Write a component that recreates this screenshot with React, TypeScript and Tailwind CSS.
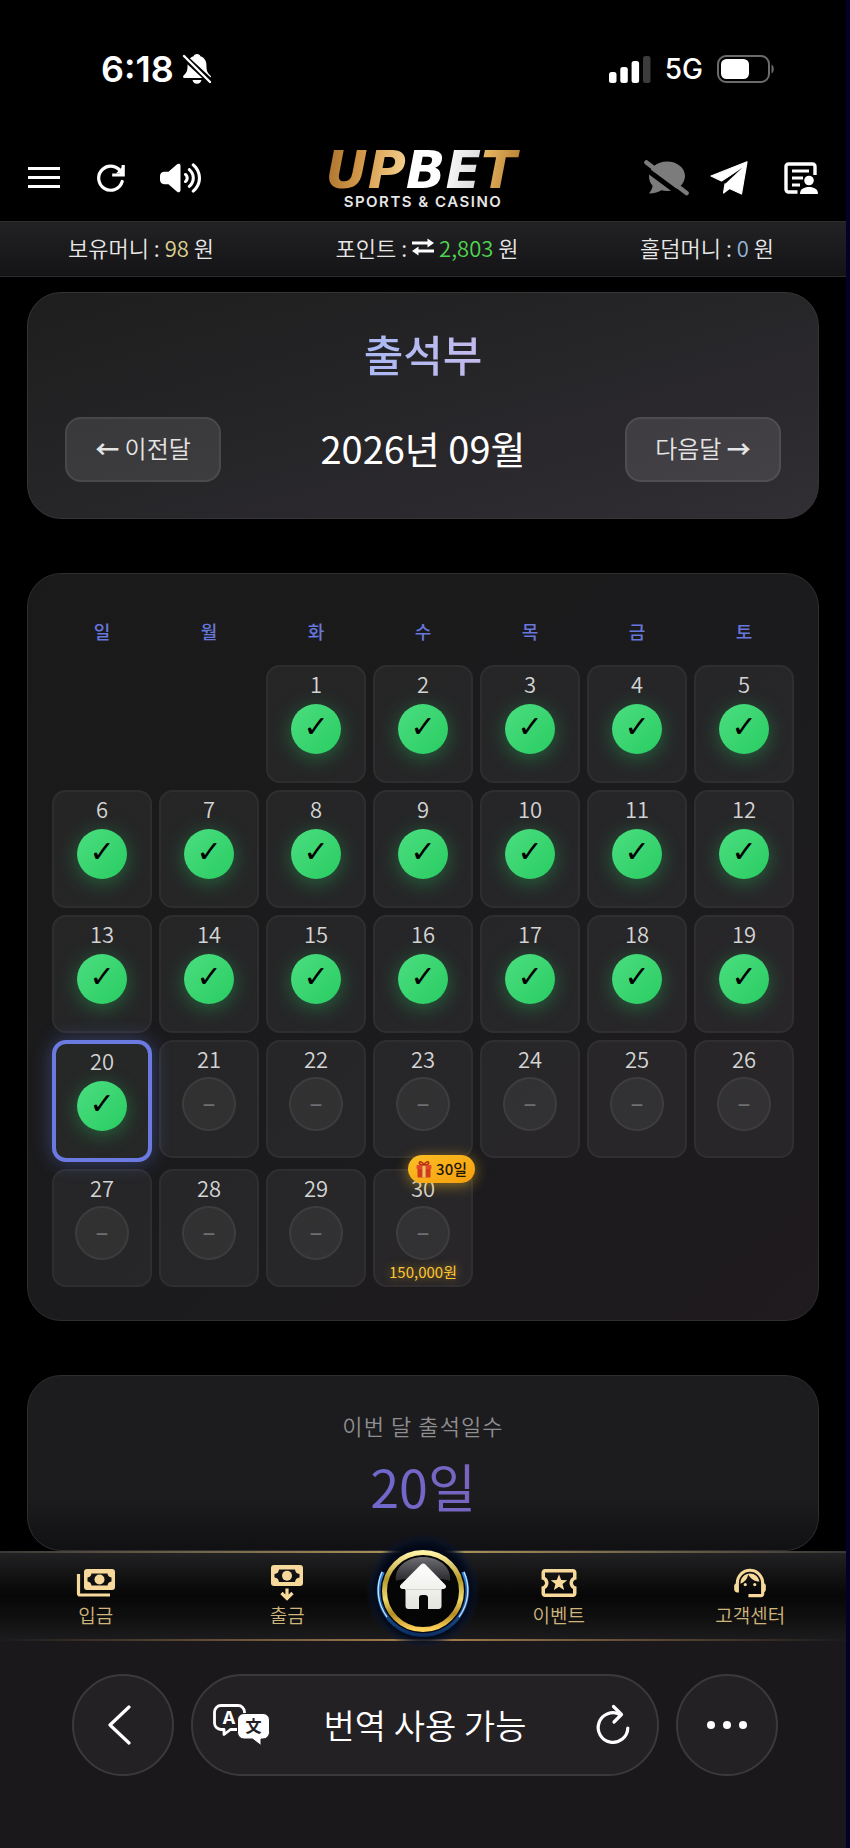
import React from 'react';
import { FaVolumeHigh } from 'react-icons/fa6';
import { MdOutlineLocalActivity, MdSupportAgent } from 'react-icons/md';

const WEEKDAYS = ['일', '월', '화', '수', '목', '금', '토'];
const FIRST_WEEKDAY = 2;
const DAYS_IN_MONTH = 30;
const TODAY = 20;

type Reward = { label: string; amount: string };

const REWARDS: Record<number, Reward> = {
  30: { label: '30일', amount: '150,000원' },
};

function BellOffIcon() {
  return (
    <svg width="30" height="32" viewBox="0 0 30 32" aria-hidden="true">
      <path
        d="M15 1c-1.900 0-3 1-3.400 2.200C7.600 4.500 5.600 8 5.600 12c0 6-1 7.500-4 10.500-1 1-.6 2.500.9 2.500h25c1.500 0 1.900-1.500.9-2.500-3-3-4-4.500-4-10.500 0-4-2-7.500-6-8.800C18 2 16.900 1 15 1zM10.500 27a4.600 4.600 0 0 0 9 0z"
        fill="#fff"
      />
      <path d="M1 3l28 26" stroke="#000" strokeWidth="6" />
      <path d="M2 3l26 26" stroke="#fff" strokeWidth="2.400" strokeLinecap="round" />
    </svg>
  );
}

function SignalIcon() {
  return (
    <svg width="42" height="27" viewBox="0 0 42 27" aria-hidden="true">
      <rect x="0" y="16" width="7.500" height="11" rx="2.500" fill="#fff" />
      <rect x="11.300" y="11" width="7.500" height="16" rx="2.500" fill="#fff" />
      <rect x="22.600" y="5" width="7.500" height="22" rx="2.500" fill="#fff" />
      <rect x="34" y="0" width="7.500" height="27" rx="2.500" fill="#3c3c3c" />
    </svg>
  );
}

function BatteryIcon() {
  return (
    <svg width="58" height="28" viewBox="0 0 58 28" aria-hidden="true">
      <rect x="1" y="1" width="51" height="26" rx="8" fill="none" stroke="#6b6b6b" strokeWidth="2" />
      <rect x="4" y="4" width="28" height="20" rx="5.500" fill="#fff" />
      <path d="M54.500 9.500c3 1.500 3 7.500 0 9z" fill="#6b6b6b" />
    </svg>
  );
}

function RefreshIcon() {
  return (
    <svg width="30" height="30" viewBox="0 0 30 30" fill="none" stroke="#fff" strokeWidth="3.200" aria-hidden="true">
      <path d="M26.200 18.500A12 12 0 1 1 25.500 10" strokeLinecap="round" />
      <path d="M27.200 2v10h-11" strokeLinejoin="miter" />
      <path d="M20 10.400h7V3z" fill="#fff" stroke="none" />
    </svg>
  );
}

function ChatOffIcon() {
  return (
    <svg width="46" height="38" viewBox="0 0 46 38" aria-hidden="true">
      <path
        d="M23 2.500C33 2.500 41 8.700 41 17S33 32 23 32c-2 0-4-.2-5.600-.7C14.500 33.200 10.500 34.500 5 34.500c2-2.500 3.300-5 3.600-7.700C6.300 24.200 5 21 5 17.500 5 9 13 2.500 23 2.500z"
        fill="#7c7c7c"
      />
      <path d="M-1 8l42 31" stroke="#000" strokeWidth="5" />
      <path d="M2.500 3.500l40 30.500" stroke="#7c7c7c" strokeWidth="4.600" strokeLinecap="round" />
    </svg>
  );
}

function PlaneIcon() {
  return (
    <svg width="38" height="34" viewBox="0 0 38 34" aria-hidden="true">
      <path
        d="M37 .8L1 15l10.500 5L31 7.500 15 23l-1.500 9 6-4.500L31.500 33z"
        fill="#fff"
        strokeLinejoin="round"
        stroke="#fff"
        strokeWidth="1.200"
      />
      <path d="M12.800 20.700L32.500 6.500 15.500 22.500z" fill="#000" />
    </svg>
  );
}

function NoteUserIcon() {
  return (
    <svg width="34" height="34" viewBox="0 0 34 34" aria-hidden="true">
      <path d="M13.500 31H4.500a2.500 2.500 0 0 1-2.500-2.500v-23A2.500 2.500 0 0 1 4.500 3h24A2.500 2.500 0 0 1 31 5.500V14" fill="none" stroke="#fff" strokeWidth="3.400" />
      <path d="M8 10h17M8 17h11M8 24h8" stroke="#fff" strokeWidth="3" />
      <circle cx="25" cy="19.500" r="4.800" fill="#fff" />
      <path d="M16 33c0-5 4-7 9-7s9 2 9 7z" fill="#fff" />
    </svg>
  );
}

function SwapIcon() {
  return (
    <svg width="24" height="18" viewBox="0 0 24 18" fill="#fff" aria-hidden="true">
      <path d="M1 3.500h15.500V.6L23 5l-6.500 4.400V6.500H1zM23 11.600H7.500V8.600L1 13l6.500 4.400v-2.800H23z" />
    </svg>
  );
}

function GiftIcon() {
  return (
    <svg width="16" height="17" viewBox="0 0 16 17" aria-hidden="true">
      <rect x="1.500" y="6.500" width="13" height="10" rx="1" fill="#cf3a1f" />
      <rect x="0.500" y="4" width="15" height="4" rx="1" fill="#e2492a" />
      <rect x="6.400" y="4" width="3.200" height="12.500" fill="#f0c05a" />
      <path d="M8 4C5 4 2.800 3.200 3.400 1.600 4 .2 6.800.8 8 4zM8 4c3 0 5.200-.8 4.600-2.400C12 .2 9.200.8 8 4z" fill="none" stroke="#b5281a" strokeWidth="1.500" />
    </svg>
  );
}

function DepositIcon() {
  return (
    <svg width="40" height="30" viewBox="0 0 40 30" aria-hidden="true">
      <path
        fillRule="evenodd"
        d="M11 1h25a3 3 0 0 1 3 3v15a3 3 0 0 1-3 3H11a3 3 0 0 1-3-3V4a3 3 0 0 1 3-3zM15.500 5.500a4.500 4.500 0 0 1-4 4v4a4.500 4.500 0 0 1 4 4h16a4.500 4.500 0 0 1 4-4v-4a4.500 4.500 0 0 1-4-4z"
        fill="#f7d99b"
      />
      <circle cx="23.500" cy="11.500" r="5" fill="#f7d99b" />
      <path d="M2.500 6v19.500a1.500 1.500 0 0 0 1.500 1.500h30" fill="none" stroke="#f7d99b" strokeWidth="3.200" />
    </svg>
  );
}

function WithdrawIcon() {
  return (
    <svg width="34" height="36" viewBox="0 0 34 36" aria-hidden="true">
      <path
        fillRule="evenodd"
        d="M4 0h26a3 3 0 0 1 3 3v15a3 3 0 0 1-3 3H4a3 3 0 0 1-3-3V3a3 3 0 0 1 3-3zM9 4.500a5 5 0 0 1-4.500 4.500v3.500A5 5 0 0 1 9 17h16a5 5 0 0 1 4.500-4.500V9A5 5 0 0 1 25 4.500z"
        fill="#f7d99b"
      />
      <circle cx="17" cy="10.700" r="5" fill="#f7d99b" />
      <path d="M17 23.500v9M11.500 28l5.500 5.500 5.500-5.500" fill="none" stroke="#f7d99b" strokeWidth="3.200" />
    </svg>
  );
}

function HomeBadge() {
  return (
    <svg className="shrink-0" width="116" height="116" viewBox="-58 -58 116 116" aria-hidden="true">
      <defs>
        <linearGradient id="ring" x1="0" y1="0" x2="0" y2="1">
          <stop offset="0" stopColor="#fff3a6" />
          <stop offset="0.350" stopColor="#b79a2b" />
          <stop offset="0.600" stopColor="#f0dc6a" />
          <stop offset="0.800" stopColor="#b48a22" />
          <stop offset="1" stopColor="#ffd35a" />
        </linearGradient>
        <linearGradient id="gloss" x1="0" y1="0" x2="0" y2="1">
          <stop offset="0" stopColor="#6d6d72" />
          <stop offset="1" stopColor="#29292c" />
        </linearGradient>
        <linearGradient id="house" x1="0" y1="0" x2="0" y2="1">
          <stop offset="0" stopColor="#ffffff" />
          <stop offset="1" stopColor="#e4e4de" />
        </linearGradient>
        <linearGradient id="arc" x1="0" y1="0" x2="0" y2="1">
          <stop offset="0" stopColor="#2f86dd" />
          <stop offset="1" stopColor="#0c2f63" />
        </linearGradient>
        <radialGradient id="halo">
          <stop offset="0.780" stopColor="#020817" />
          <stop offset="0.860" stopColor="#040d20" stopOpacity="0.800" />
          <stop offset="1" stopColor="#0a1c40" stopOpacity="0" />
        </radialGradient>
      </defs>
      <circle r="57" fill="url(#halo)" />
      <path d="M-40 -19A44 44 0 0 0 0 44A44 44 0 0 0 40 -19" fill="none" stroke="url(#arc)" strokeWidth="3.500" />
      <path d="M-41 -19A45 45 0 0 0 -36 26M41 -19A45 45 0 0 1 36 26" fill="none" stroke="#bfe0ff" strokeWidth="1.300" />
      <circle r="38.500" fill="#050505" stroke="url(#ring)" strokeWidth="5" />
      <path d="M-27 -10C-29 -24 -16 -34 0 -34S29 -24 27 -10C18 -14 -18 -14 -27 -10z" fill="url(#gloss)" />
      <path
        d="M-2 -26.500a3.500 3.500 0 0 1 4.500 0L22 -6.500c2 2 1 4.500-2 4.500h-1.500v17a3 3 0 0 1-3 3H5V7a3 3 0 0 0-3-3h-3a3 3 0 0 0-3 3v11h-10.500a3 3 0 0 1-3-3V-2H-20c-3 0-4-2.500-2-4.500z"
        fill="url(#house)"
      />
      <path d="M-18 -1.500h36.500" stroke="#d4d4cc" strokeWidth="1" />
    </svg>
  );
}

function TranslateIcon() {
  return (
    <svg width="58" height="42" viewBox="0 0 58 42" aria-hidden="true">
      <path
        d="M8 1.500h17a6.500 6.500 0 0 1 6.500 6.500v11a6.500 6.500 0 0 1-6.500 6.500h-7.500L11 30.500v-5H8A6.500 6.500 0 0 1 1.500 19V8A6.500 6.500 0 0 1 8 1.500z"
        fill="none"
        stroke="#fff"
        strokeWidth="2.800"
        strokeLinejoin="round"
      />
      <path d="M31 9.500h19a6.500 6.500 0 0 1 6.500 6.500v12.500A6.500 6.500 0 0 1 50 35h-2v6.500L39.500 35H31a6.500 6.500 0 0 1-6.500-6.500V16A6.500 6.500 0 0 1 31 9.500z" fill="#fff" stroke="#232023" strokeWidth="1" />
      <text x="16" y="20" fontSize="18" fontWeight="700" fill="#fff" textAnchor="middle" fontFamily="Inter, sans-serif">A</text>
      <text x="40.500" y="28" fontSize="16" fontWeight="700" fill="#232023" textAnchor="middle" fontFamily="'Noto Sans CJK KR', sans-serif">文</text>
    </svg>
  );
}

function StatusBar() {
  return (
    <div className="flex h-[134px] items-center justify-between pt-1 pr-[71px] pl-[101px] font-[Inter,sans-serif] text-white">
      <div className="flex items-center gap-2">
        <span className="text-4xl leading-10 font-semibold">6:18</span>
        <BellOffIcon />
      </div>
      <div className="flex items-center gap-3.5">
        <SignalIcon />
        <span className="text-[28px] leading-10 font-medium">5G</span>
        <BatteryIcon />
      </div>
    </div>
  );
}

function Logo() {
  return (
    <a href="#" className="flex flex-col items-center">
      <span className="bg-[linear-gradient(100deg,#a8702c_0%,#d59a4a_20%,#f3cf8c_41%,#ffffff_42%,#ffffff_58%,#dcdcdc_77%,#e8b764_79%,#b07a2c_100%)] bg-clip-text pr-1 font-['DejaVu_Sans',sans-serif] text-[52px] leading-12 font-bold text-transparent italic">
        UPBET
      </span>
      <span className="font-[Inter,sans-serif] text-[15px] leading-4 font-semibold tracking-widest text-[#e6e6e6]">
        SPORTS &amp; CASINO
      </span>
    </a>
  );
}

function Header() {
  return (
    <header className="flex h-[87px] items-center justify-between px-7">
      <div className="flex flex-1 items-center">
        <button type="button" aria-label="메뉴" className="flex flex-col gap-1.5">
          <span className="h-[3px] w-8 bg-white"></span>
          <span className="h-[3px] w-8 bg-white"></span>
          <span className="h-[3px] w-8 bg-white"></span>
        </button>
        <button type="button" aria-label="새로고침" className="ml-9">
          <RefreshIcon />
        </button>
        <button type="button" aria-label="소리" className="ml-[34px]">
          <FaVolumeHigh className="h-9 w-[41px] text-white" />
        </button>
      </div>
      <Logo />
      <div className="flex flex-1 items-center justify-end">
        <button type="button" aria-label="채팅 끄기">
          <ChatOffIcon />
        </button>
        <button type="button" aria-label="텔레그램" className="ml-5">
          <PlaneIcon />
        </button>
        <button type="button" aria-label="내 정보" className="ml-9">
          <NoteUserIcon />
        </button>
      </div>
    </header>
  );
}

function MoneyBar() {
  return (
    <div className="flex h-14 items-center justify-between border-t border-b border-[#2c2b2e] bg-linear-to-b from-[#222124] to-[#141315] pr-[72px] pb-1 pl-[68px] text-[22px] leading-8 font-[350] text-[#e8e8e8]">
      <p>
        보유머니 : <span className="text-[#ddd292]">98</span> 원
      </p>
      <p className="flex items-center gap-1">
        포인트 : <SwapIcon />
        <span>
          <span className="text-[#4fd552]">2,803</span> 원
        </span>
      </p>
      <p>
        홀덤머니 : <span className="text-[#93b4d8]">0</span> 원
      </p>
    </div>
  );
}

function MonthCard() {
  const buttonClass =
    'h-[65px] w-[156px] rounded-2xl border-2 border-white/8 bg-white/10 pb-1 text-2xl font-[350] text-[#e4e4e4]';
  return (
    <section className="rounded-[34px] border border-[#353436] bg-linear-to-br from-[#1e1e1e] via-[#262528] to-[#312e34] px-[37px] pt-8 pb-9">
      <h1 className="text-center text-[43px] leading-14 font-medium">
        <span className="bg-linear-to-r from-[#a9b8f3] to-[#c4bbec] bg-clip-text text-transparent">출석부</span>
      </h1>
      <div className="mt-9 flex items-center justify-between">
        <button type="button" className={buttonClass}>
          <span className="font-bold">←</span> 이전달
        </button>
        <h2 className="pb-1 text-[38px] leading-12 font-normal text-white">2026년 09월</h2>
        <button type="button" className={buttonClass}>
          다음달 <span className="font-bold">→</span>
        </button>
      </div>
    </section>
  );
}

function DayCell({ day }: { day: number }) {
  const attended = day <= TODAY;
  const isToday = day === TODAY;
  const reward = REWARDS[day];
  return (
    <div
      className={`relative flex flex-col items-center rounded-[14px] pt-1 ${
        isToday
          ? 'border-4 border-[#6b7ae0] bg-[#262727] shadow-[0_0_20px_rgba(102,126,234,0.4)]'
          : 'border-2 border-white/4 bg-white/5'
      }`}
    >
      <span className="text-[22px] leading-6 font-[350] text-[#d4d4d4]">{day}</span>
      <div className="mt-[7px] flex h-[54px] items-center">
        {attended ? (
          <span className="flex size-[50px] items-center justify-center rounded-full bg-linear-to-br from-[#4ade80] to-[#28cc62] pb-1 font-['DejaVu_Sans',sans-serif] text-3xl leading-8 text-black shadow-[0_4px_20px_rgba(34,197,94,0.4)]">
            ✓
          </span>
        ) : (
          <span className="flex size-[54px] items-center justify-center rounded-full border-2 border-white/6 bg-white/5 pb-1 text-2xl font-medium text-[#6f6f73]">
            –
          </span>
        )}
      </div>
      <span className="h-[25px] text-[15px] leading-6 whitespace-nowrap text-[#ffc531] [text-shadow:0_0_10px_rgba(251,191,36,0.6)]">
        {reward?.amount}
      </span>
      {reward && (
        <span className="absolute -top-4 -right-1 flex h-7 items-center gap-1 rounded-full bg-linear-to-br from-[#fbbf24] to-[#f59e0b] px-2 text-[15px] font-medium text-[#1c1606] shadow-[0_2px_14px_rgba(251,191,36,0.5)]">
          <GiftIcon />
          {reward.label}
        </span>
      )}
    </div>
  );
}

function CalendarCard() {
  const days = Array.from({ length: DAYS_IN_MONTH }, (_, i) => i + 1);
  return (
    <section className="rounded-[34px] border border-[#2e2d2f] bg-linear-to-br from-[#1a1a1a] via-[#1b1b1d] to-[#1f1b1f] px-6 pt-6 pb-[33px]">
      <div className="grid grid-cols-7 gap-x-[7px]">
        {WEEKDAYS.map((name) => (
          <span key={name} className="h-[67px] text-center text-lg leading-[66px] font-medium text-[#6777dc]">
            {name}
          </span>
        ))}
      </div>
      <div className="grid grid-cols-7 items-start gap-[7px]">
        {Array.from({ length: FIRST_WEEKDAY }, (_, i) => (
          <div key={`blank-${i}`}></div>
        ))}
        {days.map((day) => (
          <DayCell key={day} day={day} />
        ))}
      </div>
    </section>
  );
}

function SummaryCard() {
  return (
    <section className="rounded-[34px] border border-[#2e2d2f] bg-linear-to-b from-[#1c1b1e] from-70% to-[#111013] px-6 pt-[34px] pb-[34px] text-center">
      <p className="text-[22px] leading-[30px] font-[350] tracking-wider text-[#8f8e91]">이번 달 출석일수</p>
      <p className="mt-4 text-[52px] leading-[60px] font-normal">
        <span className="bg-linear-to-r from-[#7069cf] to-[#7864bd] bg-clip-text text-transparent">20일</span>
      </p>
    </section>
  );
}

function NavItem({ label, children }: { label: string; children: React.ReactNode }) {
  return (
    <a href="#" className="flex flex-1 flex-col items-center text-[#f7d99b]">
      <span className="flex h-9 items-center">{children}</span>
      <span className="text-[19px] leading-7 font-[350] text-[#cfb57c]">{label}</span>
    </a>
  );
}

function BottomNav() {
  return (
    <nav className="relative flex h-[90px] bg-linear-to-b from-[#232224] via-[#070707] to-[#1c1b1d] pt-3.5">
      <div className="absolute inset-x-0 top-0 h-0.5 bg-linear-to-r from-[#3a3836] via-[#b39a5a] to-[#3a3836]"></div>
      <div className="absolute inset-x-0 bottom-0 h-0.5 bg-linear-to-r from-transparent via-[#a8804e] to-transparent"></div>
      <NavItem label="입금">
        <DepositIcon />
      </NavItem>
      <NavItem label="출금">
        <WithdrawIcon />
      </NavItem>
      <a href="#" aria-label="홈" className="relative -mt-8 flex w-20 justify-center">
        <HomeBadge />
      </a>
      <NavItem label="이벤트">
        <MdOutlineLocalActivity className="size-[42px]" />
      </NavItem>
      <NavItem label="고객센터">
        <MdSupportAgent className="size-[38px]" />
      </NavItem>
    </nav>
  );
}

function BrowserBar() {
  const shape = 'flex h-[102px] items-center rounded-full border-2 border-[#3b393c] bg-[#242124]';
  return (
    <footer className="flex grow items-start gap-[17px] bg-[#1b181b] pt-[33px] pr-[68px] pl-[72px] text-white">
      <button type="button" aria-label="뒤로" className={`${shape} w-[102px] shrink-0 justify-center`}>
        <svg width="30" height="42" viewBox="0 0 30 42" fill="none" stroke="#fff" strokeWidth="3.200" strokeLinecap="round" strokeLinejoin="round" aria-hidden="true">
          <path d="M21 3L2 21l19 18" />
        </svg>
      </button>
      <div className={`${shape} flex-1 justify-between px-5`}>
        <button type="button" aria-label="번역">
          <TranslateIcon />
        </button>
        <span className="text-[34px] leading-12 font-[350]">번역 사용 가능</span>
        <button type="button" aria-label="페이지 새로고침" className="flex w-[58px] justify-end pr-1">
          <svg width="38" height="42" viewBox="0 0 38 42" fill="none" stroke="#fff" strokeWidth="3.200" strokeLinecap="round" strokeLinejoin="round" aria-hidden="true">
            <path d="M32.800 24A14.800 14.800 0 1 1 25 10.500" />
            <path d="M18.500 2.500l8 8-7.500 7.500" />
          </svg>
        </button>
      </div>
      <button type="button" aria-label="더보기" className={`${shape} w-[102px] shrink-0 justify-center gap-2`}>
        <span className="size-2 rounded-full bg-white"></span>
        <span className="size-2 rounded-full bg-white"></span>
        <span className="size-2 rounded-full bg-white"></span>
      </button>
    </footer>
  );
}

export default function App() {
  return (
    <div className="flex min-h-screen flex-col border-r-4 border-[#03002a] bg-black font-['Noto_Sans_CJK_KR',sans-serif]">
      <StatusBar />
      <Header />
      <MoneyBar />
      <main className="flex flex-col gap-[54px] px-[27px] pt-[15px]">
        <MonthCard />
        <CalendarCard />
        <SummaryCard />
      </main>
      <BottomNav />
      <BrowserBar />
    </div>
  );
}
